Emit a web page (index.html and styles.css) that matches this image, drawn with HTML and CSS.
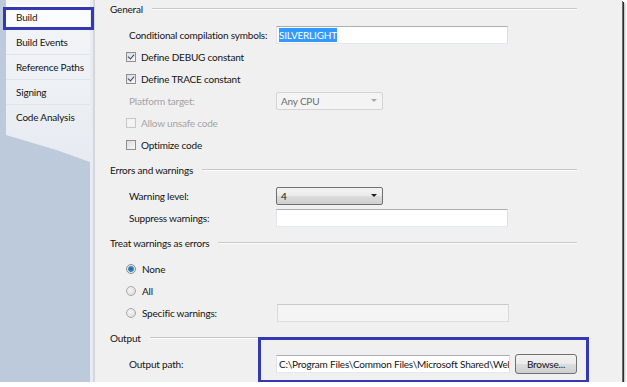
FILE: index.html
```html
<!DOCTYPE html>
<html lang="en">
<head>
    <meta charset="UTF-8">
    <title>Build properties</title>
    <link rel="stylesheet" href="styles.css">
</head>
<body>

<div class="window">
    <nav class="tabs">
        <ul class="tab-list">
            <li class="tab selected">Build<span class="mark"></span></li>
            <li class="tab">Build Events</li>
            <li class="tab">Reference Paths</li>
            <li class="tab">Signing</li>
            <li class="tab">Code Analysis</li>
        </ul>
    </nav>

    <main class="pane">
        <section class="group">
            <div class="group-title"><span>General</span></div>
            <div class="row">
                <span class="label">Conditional compilation symbols:</span>
                <div class="textbox wide"><span class="selection">SILVERLIGHT</span></div>
            </div>
            <div class="row check-row"><span class="checkbox checked"></span>Define DEBUG constant</div>
            <div class="row check-row"><span class="checkbox checked"></span>Define TRACE constant</div>
            <div class="row disabled">
                <span class="label">Platform target:</span>
                <div class="dropdown off">Any CPU</div>
            </div>
            <div class="row check-row disabled"><span class="checkbox off"></span>Allow unsafe code</div>
            <div class="row check-row"><span class="checkbox"></span>Optimize code</div>
        </section>

        <section class="group">
            <div class="group-title"><span>Errors and warnings</span></div>
            <div class="row">
                <span class="label">Warning level:</span>
                <div class="dropdown">4</div>
            </div>
            <div class="row">
                <span class="label">Suppress warnings:</span>
                <div class="textbox wide"></div>
            </div>
        </section>

        <section class="group">
            <div class="group-title"><span>Treat warnings as errors</span></div>
            <div class="row check-row"><span class="radio checked"></span>None</div>
            <div class="row check-row"><span class="radio"></span>All</div>
            <div class="row check-row">
                <span class="radio"></span>
                <span class="label short">Specific warnings:</span>
                <div class="textbox wide off"></div>
            </div>
        </section>

        <section class="group">
            <div class="group-title"><span>Output</span></div>
            <div class="row">
                <span class="label">Output path:</span>
                <div class="path-field">
                    <div class="textbox path">C:\Program Files\Common Files\Microsoft Shared\Web</div>
                    <button class="browse">Browse...</button>
                    <span class="mark"></span>
                </div>
            </div>
        </section>
    </main>
</div>

</body>
</html>
```

FILE: styles.css
```css
body {
    margin: 0;
    background: #ffffff;
    font-family: Lato, "Open Sans", sans-serif;
    font-size: 10px;
    letter-spacing: -0.2px;
    color: #141414;
}
.window {
    display: flex;
    width: 622px;
    height: 382px;
    background: #f0f0f0;
    box-shadow: 1px 1px 0 #6a6a6a, 2px 2px 0 #2e2e2e, 3px 3px 2px rgba(0, 0, 0, 0.3);
}

/* left tab strip */
.tabs {
    position: relative;
    width: 95px;
    flex-shrink: 0;
    background: linear-gradient(to right, #bccadb 0, #bccadb 90px, #e9ecf1 90px, #e9ecf1 93px, #d2d7de 93px);
}
.tabs::before {
    content: '';
    position: absolute;
    left: 6px;
    top: 0;
    width: 84px;
    height: 162px;
    background: linear-gradient(#f4f6f9, #e7ebf1);
    clip-path: polygon(0 0, 100% 0, 100% 100%, 60% 150px, 0 135px);
}
.tab-list {
    position: relative;
    list-style: none;
    margin: 0;
    padding: 5px 0 0 6px;
    width: 84px;
}
.tab {
    position: relative;
    height: 25px;
    line-height: 25px;
    padding-left: 10px;
    white-space: nowrap;
    border-bottom: 1px solid #e0e5eb;
    box-sizing: border-box;
}
.tab:last-child {
    border-bottom: none;
}
.tab.selected {
    background: #fbfcfd;
}
.tab .mark {
    position: absolute;
    left: -3px;
    right: -4px;
    top: 2px;
    bottom: -1px;
    border: 3px solid #3438b2;
}

/* property pane */
.pane {
    flex: 1;
    padding: 0 45px 0 15px;
    white-space: nowrap;
}
.group + .group {
    margin-top: 7px;
}
.group-title {
    display: flex;
    align-items: center;
    height: 18px;
    margin-bottom: 8px;
}
.group-title::after {
    content: '';
    flex: 1;
    margin-left: 9px;
    border-top: 1px solid #c8c8c8;
    border-bottom: 1px solid #fbfbfb;
}
.row {
    display: flex;
    align-items: center;
    height: 18px;
    padding-left: 19px;
}
.row + .row {
    margin-top: 4px;
}
.check-row {
    padding-left: 16px;
}
.label {
    width: 147px;
    flex-shrink: 0;
}
.label.short {
    width: 135px;
}
.disabled {
    color: #a4a4a4;
}

.checkbox {
    width: 10px;
    height: 10px;
    margin-right: 5px;
    box-sizing: border-box;
    border: 1px solid #8e8f8f;
    background: linear-gradient(135deg, #dcdcdc, #f8f8f8);
    position: relative;
}
.checkbox.checked::after {
    content: '';
    position: absolute;
    left: 2px;
    top: 0;
    width: 3px;
    height: 5px;
    border-right: 1.5px solid #2c4770;
    border-bottom: 1.5px solid #2c4770;
    transform: rotate(40deg);
}
.checkbox.off {
    border-color: #c8c8c8;
    background: #f3f3f3;
}
.radio {
    width: 10px;
    height: 10px;
    margin-right: 6px;
    box-sizing: border-box;
    border-radius: 50%;
    border: 1px solid #a9a9a9;
    background: radial-gradient(circle at 40% 40%, #f6f6f6, #d6d6d6);
}
.radio.checked {
    border-color: #8e8f8f;
    background: radial-gradient(circle, #1c5f8f 0, #3c8bc4 2.5px, #dfe8ef 3.5px, #eeeeee);
}

.textbox {
    height: 18px;
    box-sizing: border-box;
    border: 1px solid;
    border-color: #abadb3 #dbdfe6 #e3e9ef #e2e3ea;
    background: #ffffff;
    padding-left: 2px;
    line-height: 16px;
}
.textbox.wide {
    width: 232px;
}
.textbox.off {
    background: #f4f4f4;
    border-color: #c9c9c9 #dadada #dedede #dadada;
}
.selection {
    background: #3399ff;
    color: #ffffff;
    padding: 1px 0;
}
.dropdown {
    position: relative;
    width: 107px;
    height: 18px;
    box-sizing: border-box;
    border: 1px solid #707070;
    border-radius: 2px;
    padding-left: 4px;
    line-height: 16px;
    background: linear-gradient(#f3f3f3, #ebebeb 50%, #dddddd 50%, #cfcfcf);
}
.dropdown::after {
    content: '';
    position: absolute;
    right: 5px;
    top: 6px;
    border-left: 3px solid transparent;
    border-right: 3px solid transparent;
    border-top: 3px solid #1e1e1e;
}
.dropdown.off {
    border-color: #d4d4d4;
    background: #f4f4f4;
    color: #6e6e6e;
}
.dropdown.off::after {
    border-top-color: #a8a8a8;
}

.path-field {
    position: relative;
    display: flex;
    align-items: center;
    height: 18px;
}
.textbox.path {
    width: 234px;
    overflow: hidden;
}
.browse {
    width: 62px;
    height: 20px;
    margin-left: 5px;
    padding: 0;
    border: 1px solid #707070;
    border-radius: 3px;
    background: linear-gradient(#f2f2f2, #ebebeb 50%, #dddddd 50%, #cfcfcf);
    font-family: inherit;
    font-size: 10px;
    letter-spacing: -0.2px;
    color: #141414;
}
.path-field .mark {
    position: absolute;
    left: -18px;
    right: -12px;
    top: -18px;
    bottom: -10px;
    border: 3px solid #3438b2;
}
```
